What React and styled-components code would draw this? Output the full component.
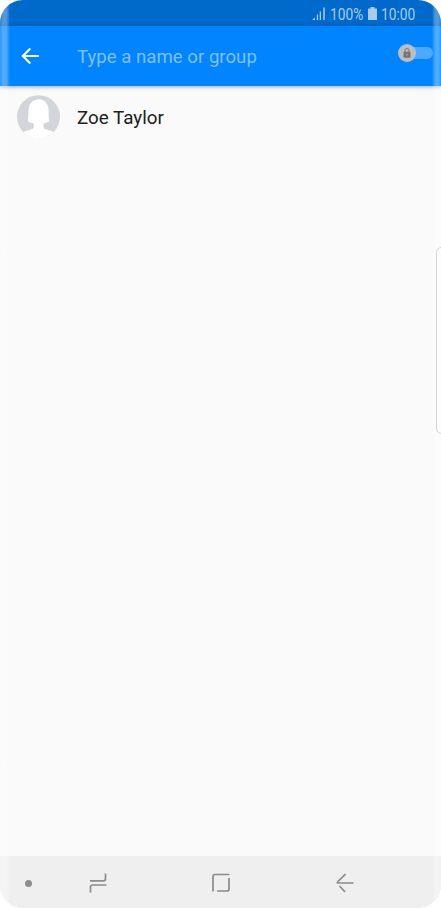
import React, { useState } from 'react'
import styled, { createGlobalStyle } from 'styled-components'

const GlobalStyle = createGlobalStyle`
  * {
    box-sizing: border-box;
  }

  body {
    margin: 0;
    background: #fff;
    font-family: Roboto, sans-serif;
  }
`

const Screen = styled.main`
  position: relative;
  display: flex;
  flex-direction: column;
  width: 441px;
  height: 908px;
  overflow: hidden;
  border-radius: 23px;
  background: #fafafa;
`

const StatusBar = styled.div`
  display: flex;
  justify-content: flex-end;
  flex: none;
  height: 26px;
  padding: 2px 25px 0 0;
  background: #0069cc;
  color: #a9cbed;

  svg {
    flex: none;
    display: block;
  }
`

const StatusText = styled.span`
  width: ${props => props.$width}px;
  margin-left: ${props => props.$gap}px;
  font-size: 16px;
  line-height: 25px;
  white-space: nowrap;
  transform: scaleX(${props => props.$stretch});
  transform-origin: left;
`

const BatterySlot = styled.span`
  margin-left: 5px;
`

const Toolbar = styled.header`
  display: flex;
  flex: none;
  height: 60px;
  padding: 0 8px 0 20px;
  background: #0084ff;
  box-shadow: 0 1px 4px rgba(0, 0, 0, 0.35);
`

const BackButton = styled.button`
  display: flex;
  align-items: center;
  width: 57px;
  padding: 0;
  border: 0;
  background: none;
`

const SearchInput = styled.input`
  flex: 1;
  min-width: 0;
  padding: 2px 0 0;
  border: 0;
  outline: 0;
  background: none;
  color: #fff;
  font: 18.65px Roboto, sans-serif;

  &::placeholder {
    color: #7fc1ff;
    opacity: 1;
  }
`

const SecretSwitch = styled.button`
  display: flex;
  align-items: center;
  width: 35px;
  height: 18px;
  margin-top: 18px;
  padding: 0;
  border: 0;
  background: none;
`

const Track = styled.span`
  width: 25px;
  height: 12px;
  margin-left: -8px;
  border-radius: 6px;
  background: #4da9ff;
`

const Thumb = styled.span`
  z-index: 1;
  display: flex;
  flex: none;
  align-items: center;
  justify-content: center;
  width: 18px;
  height: 18px;
  border-radius: 50%;
  background: #bdbdbd;
`

const ContactList = styled.ul`
  flex: 1;
  margin: 0;
  padding: 9px 17px;
  list-style: none;
`

const Contact = styled.li`
  display: flex;
  align-items: center;
  gap: 17px;
  height: 44px;
`

const ContactName = styled.span`
  padding-top: 2px;
  color: #202020;
  font-size: 18.8px;
`

const NavBar = styled.nav`
  display: grid;
  grid-template-columns: 57px 82px 164px 84px;
  flex: none;
  height: 52px;
  background: #efefef;
`

const NavButton = styled.button`
  display: flex;
  align-items: center;
  justify-content: center;
  padding: 2px 0 0;
  border: 0;
  background: none;
`

const Dot = styled.span`
  width: 7px;
  height: 7px;
  border-radius: 50%;
  background: #8c8c8c;
`

// curved glass reflection along the sides of the display
const Edge = styled.div`
  position: absolute;
  top: 0;
  bottom: 0;
  ${props => props.$side}: 0;
  width: ${props => props.$width}px;
  background: linear-gradient(
    to ${props => props.$side === 'left' ? 'right' : 'left'},
    rgba(255, 255, 255, 0.16),
    rgba(255, 255, 255, 0.32) 30%,
    rgba(255, 255, 255, 0.3) 65%,
    rgba(255, 255, 255, 0)
  );
  pointer-events: none;
`

const EdgePanel = styled.div`
  position: absolute;
  top: 247px;
  right: -6px;
  width: 11px;
  height: 187px;
  border: 1px solid #d3d3d3;
  border-radius: 6px;
  background: #fdfdfd;
`

const Signal = () => <svg width="15" height="24" viewBox="0 0 15 24" fill="currentColor">
  <path d="M1 18l3-2.500V18zM5.800 12.500h1.300V18H5.800zM8.700 9.500H10V18H8.700zM12.300 5.500h1.500V18h-1.500z" />
</svg>

const Battery = () => <svg width="9" height="24" viewBox="0 0 9 24" fill="currentColor">
  <path d="M2.500 5h4v1.500H8.500q.5 0 .5.5V17.500q0 .5-.5.5H.5q-.5 0-.5-.5V7q0-.5.5-.5h2z" />
</svg>

const BackArrow = () => <svg width="20" height="20" viewBox="0 0 20 20" fill="none" stroke="#fff" strokeWidth="2.1">
  <path d="M18.800 10H3M10.300 2.500L2.800 10l7.500 7.500" />
</svg>

const Lock = () => <svg width="8" height="10" viewBox="0 0 8 10">
  <path d="M2 4V2.500a2 2 0 0 1 4 0V4" fill="none" stroke="#757575" />
  <rect x=".5" y="3.700" width="7" height="6" rx=".7" fill="#757575" />
  <circle cx="4" cy="6.700" r=".8" fill="#bdbdbd" />
</svg>

const Avatar = () => <svg width="43" height="44" viewBox="0 -.2 43 44">
  <circle cx="21.500" cy="21.500" r="21.500" fill="#d2d5da" />
  <path
    d="M22 4C15 4 11.500 9 11.500 16c0 4-.2 7-.6 9.800.7 1.200 2.500 2 5.800 2.200v4C16 35 10.500 34 6.500 37A21.500 21.500 0 0 0 36.500 37C32.500 34 27 35 26.500 32v-4c3-.2 5-.8 5.700-2.200-.7-2.800-.5-5.800-.5-9.800C31.700 9 28 4 22 4z"
    fill="#fff"
  />
</svg>

const navStroke = { fill: 'none', stroke: '#8c8c8c', strokeWidth: 1.7 }

const Recents = () => <svg width="18" height="20" viewBox="0 0 18 20" {...navStroke}>
  <path d="M1 7.800h13.500q2 0 2-2V.5M17.500 12H3.500q-2 0-2 2v5.500" />
</svg>

const Home = () => <svg width="18" height="20" viewBox="0 0 18 20" {...navStroke}>
  <path d="M1 18.500V3.500q0-2 2-2h14.500M17 5v11q0 2-2 2H5" />
</svg>

const NavBack = () => <svg width="18" height="20" viewBox="0 0 18 20" {...navStroke}>
  <path d="M9.500 1.200L1.700 8.700q-.9 1.300.5 1.300H17.500M3.500 13l5.500 5.800" />
</svg>

const contacts = ['Zoe Taylor']

const App = () => {
  const [query, setQuery] = useState('')

  return <>
    <GlobalStyle />
    <Screen>
      <StatusBar>
        <Signal />
        <StatusText $gap={4} $width={33} $stretch={0.86}>100%</StatusText>
        <BatterySlot><Battery /></BatterySlot>
        <StatusText $gap={4} $width={35} $stretch={0.86}>10:00</StatusText>
      </StatusBar>
      <Toolbar>
        <BackButton aria-label="Back"><BackArrow /></BackButton>
        <SearchInput
          value={query}
          onChange={e => setQuery(e.target.value)}
          placeholder="Type a name or group" />
        <SecretSwitch role="switch" aria-checked="false" aria-label="Secret">
          <Thumb><Lock /></Thumb>
          <Track />
        </SecretSwitch>
      </Toolbar>
      <ContactList>
        {contacts.map(name => <Contact key={name}>
          <Avatar />
          <ContactName>{name}</ContactName>
        </Contact>)}
      </ContactList>
      <NavBar>
        <NavButton aria-label="Hide bar"><Dot /></NavButton>
        <NavButton aria-label="Recents"><Recents /></NavButton>
        <NavButton aria-label="Home"><Home /></NavButton>
        <NavButton aria-label="Back"><NavBack /></NavButton>
      </NavBar>
      <Edge $side="left" $width={10} />
      <Edge $side="right" $width={9} />
      <EdgePanel />
    </Screen>
  </>
}

export default App
